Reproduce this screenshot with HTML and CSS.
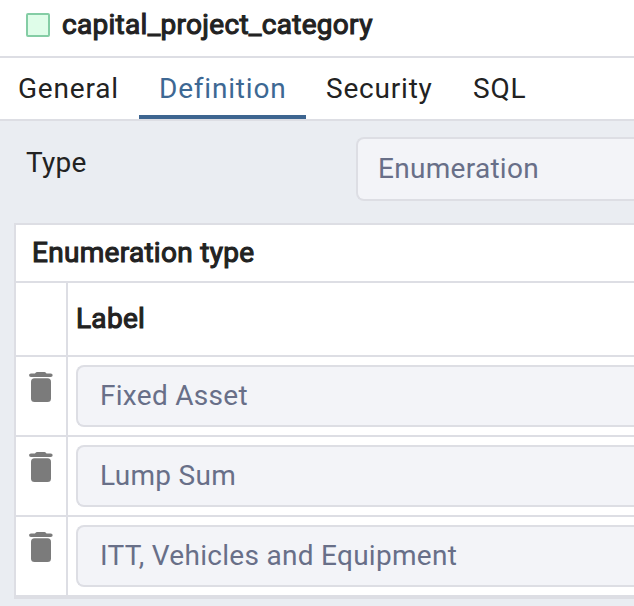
FILE: index.html
```html
<!DOCTYPE html>
<html lang="en">
<head>
<meta charset="utf-8">
<title>capital_project_category</title>
<link rel="stylesheet" href="styles.css">
</head>
<body>
<svg class="sprite" aria-hidden="true">
  <symbol id="trash" viewBox="0 0 24 30">
    <path d="M2 1.500H6C6.800.4 7.500 0 9 0h5.500c1.500 0 2.200.4 3 1.500h4.200c2.500 0 2.500 3.500 0 3.500H2C-.5 5-.5 1.500 2 1.500Z"/>
    <rect x="2" y="6.300" width="20" height="23.700" rx="3.500"/>
  </symbol>
</svg>
<header class="title-bar"><span class="type-icon"></span><h1 class="title">capital_project_category</h1></header>
<nav class="tabs">
  <a class="tab general">General</a>
  <a class="tab definition active">Definition</a>
  <a class="tab security">Security</a>
  <a class="tab">SQL</a>
</nav>
<main class="panel">
  <div class="field"><label class="field-label">Type</label><div class="input select">Enumeration</div></div>
  <section class="grid">
    <h2 class="grid-title">Enumeration type</h2>
    <div class="row head"><div class="action"></div><div class="cell label">Label</div></div>
    <div class="row"><div class="action"><svg class="trash"><use href="#trash"/></svg></div><div class="cell"><div class="input">Fixed Asset</div></div></div>
    <div class="row"><div class="action"><svg class="trash"><use href="#trash"/></svg></div><div class="cell"><div class="input">Lump Sum</div></div></div>
    <div class="row"><div class="action"><svg class="trash"><use href="#trash"/></svg></div><div class="cell"><div class="input">ITT, Vehicles and Equipment</div></div></div>
  </section>
</main>
</body>
</html>
```
FILE: styles.css
```css
* { box-sizing: border-box; }
body { margin: 0; width: 634px; height: 606px; overflow: hidden; background: #eaedf2; color: #222; font: 400 28px/32px Roboto, sans-serif; }
h1, h2 { margin: 0; font-size: 28px; line-height: 32px; }
.sprite { display: none; }
.title-bar { height: 58px; padding: 9px 0 0 26px; display: flex; background: #fff; border-bottom: 2px solid #dddee4; }
.type-icon { width: 24px; height: 24px; margin: 4px 12px 0 0; background: #dffde9; border: 2px solid #84cda5; border-radius: 2px; }
.title, .grid-title, .label { font-weight: 400; letter-spacing: .29px; -webkit-text-stroke: 1.1px #222; }
.tabs { height: 63px; display: flex; background: #fff; border-bottom: 2px solid #dddee4; letter-spacing: .8px; }
.tab { padding-top: 15px; height: 61px; }
.general { width: 139px; padding-left: 18px; }
.definition { width: 167px; padding-left: 20px; }
.security { width: 167px; padding-left: 20px; }
.active { color: #3d6893; border-bottom: 4px solid #3d6590; }
.panel { padding: 16px 0 0 14px; }
.field { display: flex; height: 86px; }
.field-label { width: 342px; padding: 10px 0 0 12px; letter-spacing: .3px; }
.input { flex: 1; height: 62px; padding: 13px 22px; color: #686f88; background: #f3f4f8; border: 2px solid #dddee4; border-right: 0; border-radius: 8px 0 0 8px; letter-spacing: .29px; }
.select { height: 64px; flex: 1; padding: 14px 20px; }
.grid { background: #fff; border-left: 2px solid #dddee4; border-top: 2px solid #dddee4; border-bottom: 2px solid #dddee4; }
.grid-title { height: 58px; padding: 12px 16px; border-bottom: 2px solid #dddee4; }
.row { display: flex; height: 80px; border-bottom: 2px solid #dddee4; }
.head { height: 74px; }
.action { width: 52px; padding: 15px 0 0 13px; border-right: 2px solid #dddee4; }
.cell { flex: 1; padding: 8px 0 0 8px; }
.label { padding-top: 20px; }
.trash { display: block; width: 24px; height: 30px; fill: #7b7b7b; }
```
